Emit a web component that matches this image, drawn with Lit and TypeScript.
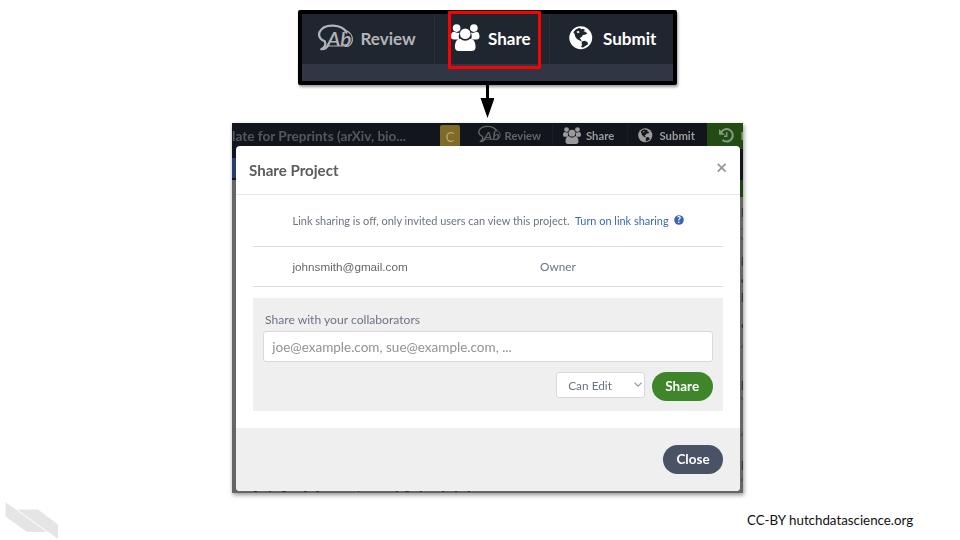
import { LitElement, html, svg, css } from "lit";
import { customElement, property } from "lit/decorators.js";

@customElement("tool-icon")
class ToolIcon extends LitElement {
  @property() name = "";
  static styles = css`
    :host { display: block; flex: none; }
    svg { display: block; width: 100%; height: 100%; overflow: visible; }
    .mark { font: italic 600 19px Lato, sans-serif; fill: currentColor; }
    .q { font: 900 8.500px Lato, sans-serif; fill: #fff; text-anchor: middle; }
  `;
  private body() {
    switch (this.name) {
      case "review":
        return svg`
          <path d="M28.500 7.600C24.500 -1 6 -2.300 1.600 7C-.3 11.500 3 15 6.800 16.300C8.200 19.500 6.600 22.800 3.300 24.200C7 24.300 9.400 22.200 10.300 19.800" fill="none" stroke="currentColor" stroke-width="2.200" stroke-linecap="round" stroke-linejoin="round"/>
          <path d="M27 5.200C32 7 35 11 34.300 15.500C33.700 19.500 31 21.700 26.800 21.400" fill="none" stroke="currentColor" stroke-width="1.300"/>
          <text class="mark" x="9" y="21.400" textLength="24.500" lengthAdjust="spacingAndGlyphs">Ab</text>
          <path d="M9.500 21H31" stroke="currentColor" stroke-width="1"/>`;
      case "share":
        return svg`<g fill="currentColor">
          <circle cx="5.700" cy="4.200" r="3.900"/><circle cx="23.300" cy="4.200" r="3.900"/>
          <path d="M3.200 8C1 8 0 10 0 12.800C0 15 1 15.900 3 15.900H8.600C7.600 13.500 7.700 11 8.800 9C7 9.300 5 9.200 3.200 8Z"/>
          <path d="M25.800 8C28 8 29 10 29 12.800C29 15 28 15.900 26 15.900H20.400C21.400 13.500 21.300 11 20.200 9C22 9.300 24 9.200 25.800 8Z"/>
          <circle cx="14.500" cy="10" r="5.400"/>
          <path d="M9.600 15C12 17.700 17 17.700 19.400 15C23.500 15 25 19 25 23.400C25 26 23.600 27.400 21 27.400H8C5.400 27.400 4 26 4 23.400C4 19 5.500 15 9.600 15Z"/></g>`;
      case "globe":
        return svg`<circle cx="12" cy="12" r="11.700" fill="currentColor"/>
          <path fill="var(--sea)" d="M5.200 5.300C7 3 9.400 2.200 11.400 2.100L12.200 3.400L14.300 2.700L16.400 4.100L14.700 5.300L16.800 5.900L18.600 7.600L16.400 9L14.200 9.300L12.900 11.200L10.900 12.300L12.300 14L13.100 16L10.900 14.800L8.100 13.200L6.200 10.500L5.800 8.100L4.500 6.600Z"/>
          <path fill="var(--sea)" d="M13.700 15.600L16 15L18.800 16.300L19.500 18.600L16.700 20.500L14.500 22L12.200 21.400L13.300 19.300L12.800 17.200Z"/>
          <path fill="currentColor" d="M7.800 5.700L10 5L10.800 6.600L8.700 7.500Z"/>`;
      case "history":
        return svg`<g fill="none" stroke="currentColor" stroke-width="2"><path d="M1.900 4.800A6.200 6.200 0 1 1 3.500 11.900"/><path d="M7.700 4.200V8.300H5" stroke-width="1.500"/></g><path fill="currentColor" d="M0 1V6.700H5.700Z"/>`;
      case "help":
        return svg`<circle cx="5" cy="5" r="4.800" fill="#3a66b5"/><text class="q" x="5" y="8">?</text>`;
      case "chevron":
        return svg`<path d="M.5 .7L4 4.100L7.500 .7" fill="none" stroke="#9a9ea6" stroke-width="1.200"/>`;
      default:
        return svg`<path d="M.8 .8L8.600 8.600M8.600 .8L.8 8.600" stroke="#999" stroke-width="1.900"/>`;
    }
  }
  render() {
    const boxes: Record<string, string> = {
      review: "0 0 34 25", share: "0 0 29 27.5", globe: "0 0 24 24",
      history: "0 0 15 15", help: "0 0 10 10", chevron: "0 0 8 5", close: "0 0 9.4 9.4",
    };
    return html`<svg viewBox=${boxes[this.name]}>${this.body()}</svg>`;
  }
}

@customElement("app-root")
class AppRoot extends LitElement {
  static styles = css`
    :host {
      display: flex; flex-direction: column; position: relative; width: 960px; height: 540px;
      overflow: hidden; background: #fff; font-family: Lato, sans-serif; box-sizing: border-box;
    }
    * { box-sizing: border-box; }
    span, button { white-space: nowrap; }
    .callout {
      position: relative; width: 379px; height: 75px; margin: 10px 0 0 298px; flex: none;
      border: 4px solid #000; border-radius: 2px; background: #303644;
      box-shadow: 1px 2px 3px rgba(0,0,0,.4);
    }
    .tools { display: flex; height: 50px; background: #1f262f; }
    .cell { display: flex; align-items: center; border-right: 1.500px solid #2a303b; color: #fff; font-weight: 700; font-size: 17px; }
    .cell.last { border: 0; }
    .c1 { width: 133px; padding-left: 16px; gap: 8.500px; color: #b3b4b7; }
    .c2 { width: 115px; padding-left: 16px; gap: 8.500px; }
    .c3 { width: 123px; padding-left: 19px; gap: 10.500px; }
    .callout .i-review { width: 34px; height: 25px; margin-top: -4px; }
    .callout .i-share { width: 28.500px; height: 27px; margin-top: -3px; }
    .callout .i-globe { width: 23.500px; height: 23.500px; margin-top: -3px; --sea: #1f262f; }
    .callout .cell span { margin-top: -2px; }
    .focus { position: absolute; left: 146px; top: -3px; width: 93px; height: 58px; border: 3px solid #f00; border-radius: 1px; }
    .arrow { position: relative; width: 14px; height: 37px; margin: -4px 0 0 480px; flex: none; display: block; }
    .shot {
      position: relative; width: 511px; height: 370px; margin: 5px 0 0 232px; flex: none;
      background: #666; overflow: hidden;
    }
    .shadow { flex: none; filter: drop-shadow(1px 2px 2px rgba(0,0,0,.42)); }
    .nav { display: flex; height: 57px; background: #12161c; color: #7b7c7e; font-weight: 700; font-size: 11.300px; }
    .nav > div { display: flex; align-items: center; height: 26px; flex: none; }
    .nav span { margin-top: -1px; }
    .title { width: 208px; color: #54575b; font-size: 13.600px; }
    .avatar { width: 20px; height: 24px; margin-top: 2px; padding-bottom: 3px; border-radius: 2px; justify-content: center; background: #806a27; color: #b5aa80; font-size: 13px; font-weight: 400; }
    .nav .n1 { width: 92px; padding-left: 17.500px; gap: 5px; color: #626365; }
    .nav .n2 { width: 75px; padding-left: 10px; gap: 5px; color: #9b9b9c; border-left: 1px solid #181c23; }
    .nav .n3 { width: 80px; padding-left: 10px; gap: 7px; color: #9b9b9c; border-left: 1px solid #181c23; }
    .nav .n4 { width: 36px; padding-left: 11.500px; gap: 7px; background: #224c13; color: #879981; }
    .nav .i-review { width: 22px; height: 16px; margin-top: -4px; }
    .nav .i-share { width: 18px; height: 17px; margin-top: -2px; }
    .nav .i-globe { width: 14.500px; height: 14.500px; margin-top: -1px; --sea: #12161c; }
    .i-history { width: 15px; height: 15px; margin-top: -1px; }
    .patch { position: absolute; }
    .p1 { left: 0; top: 35px; width: 5px; height: 20px; background: #263f6b; }
    .p2 { left: 507px; top: 57px; width: 4px; height: 17px; background: #1d4410; }
    .ticks { position: absolute; left: 508.500px; top: 80px; width: 3px; height: 285px; }
    .specks { position: absolute; left: 22px; top: 367px; width: 230px; height: 2px; }
    .modal {
      position: absolute; left: 4px; top: 22.500px; width: 504px; height: 345px;
      display: flex; flex-direction: column; background: #fff; border-radius: 4px; overflow: hidden;
      color: #6c7384; font-size: 10.970px;
    }
    .head { display: flex; justify-content: space-between; height: 49.500px; padding: 0 14px 0 13px; border-bottom: 1px solid #e8e8e8; flex: none; }
    .head span { color: #5c5c5e; font-size: 15.100px; font-weight: 700; line-height: 49px; }
    .head tool-icon { width: 9.400px; height: 9.400px; margin-top: 17.500px; }
    .body { height: 233px; padding: 0 17px; flex: none; }
    .row { display: flex; align-items: center; padding-left: 39.500px; border-bottom: 1px solid #dcdcdc; }
    .link { height: 52px; }
    .link a { color: #3b68b8; margin-left: 5.500px; font-size: 10.930px; }
    .link tool-icon { width: 10px; height: 10px; margin: -1px 0 0 5px; }
    .member { height: 40px; font-size: 11.750px; }
    .member span { flex: none; width: 247.500px; }
    .member .role { width: auto; }
    .member .mail { font-family: "Liberation Sans", sans-serif; color: #666; font-size: 11.700px; }
    .invite { margin-top: 11px; height: 113px; padding: 13.500px 10.300px 0 10.300px; background: #efefef; display: flex; flex-direction: column; }
    .invite label { height: 19px; line-height: 16px; padding-left: 1.700px; font-size: 12.130px; }
    .field { height: 31px; line-height: 30px; padding-left: 8px; background: #fff; border: 1px solid #d9d9d9; border-radius: 3px; color: #929292; font-size: 13.520px; }
    .actions { display: flex; justify-content: flex-end; gap: 7px; margin-top: 10.500px; }
    .select { display: flex; align-items: center; justify-content: space-between; width: 89px; height: 26px; padding: 0 2px 0 11.500px; background: #fff; border: 1px solid #d8d8d8; border-radius: 3px; font-size: 11.850px; }
    .select tool-icon { width: 8px; height: 5px; margin-top: -2px; }
    button { border: 0; padding: 0 0 2px; height: 29px; border-radius: 15px; color: #fff; font: 700 13.500px Lato, sans-serif; width: 61px; }
    .go { background: #3f8529; }
    .foot { flex: 1; display: flex; justify-content: flex-end; padding: 17px 17px 0; background: #efefef; }
    .close { background: #495365; width: 60px; }
    .credit { position: absolute; left: 747px; top: 512px; font-size: 13.320px; line-height: 16px; color: #111; }
    .logo { position: absolute; left: 5px; top: 501px; width: 54px; height: 39px; }
  `;

  render() {
    return html`
      <div class="callout">
        <div class="tools">
          <div class="cell c1"><tool-icon class="i-review" name="review"></tool-icon><span>Review</span></div>
          <div class="cell c2"><tool-icon class="i-share" name="share"></tool-icon><span>Share</span></div>
          <div class="cell c3 last"><tool-icon class="i-globe" name="globe"></tool-icon><span>Submit</span></div>
        </div>
        <div class="focus"></div>
      </div>
      <svg class="arrow" viewBox="0 0 14 37"><path d="M6 0H9V17H14.500L7.500 37L.5 17H6Z"/></svg>
      <div class="shadow">
        <div class="shot">
          <div class="nav">
            <div class="title"><span>late for Preprints (arXiv, bio...</span></div>
            <div class="avatar">C</div>
            <div class="n1"><tool-icon class="i-review" name="review"></tool-icon><span>Review</span></div>
            <div class="n2"><tool-icon class="i-share" name="share"></tool-icon><span>Share</span></div>
            <div class="n3"><tool-icon class="i-globe" name="globe"></tool-icon><span>Submit</span></div>
            <div class="n4"><tool-icon class="i-history" name="history"></tool-icon><span>H</span></div>
          </div>
          <div class="patch p1"></div>
          <div class="patch p2"></div>
          <svg class="ticks" viewBox="0 0 3 285">
            <path d="M1.500 5V14M1.500 54V63M1.500 90V99M1.500 178V187M1.500 258V267" stroke="#333944" stroke-width="1.500"/>
            <path d="M0 26H3M0 34L3 38M0 145L3 141M0 194L3 198M0 233L3 229M0 278L3 274" stroke="#40454e" stroke-width="1.200" fill="none"/>
            <circle cx="2.500" cy="78" r="2.200" fill="#303641"/><circle cx="2.500" cy="123" r="2.200" fill="#303641"/>
          </svg>
          <svg class="specks" viewBox="0 0 230 2"><path d="M0 1.500H3M15 1.500H17M28 1.500H32M50 1.500H53M62 1.500H65M104 1.500H105M142 1.500H144M151 1.500H155M166 1.500H168M188 1.500H190M201 1.500H203M214 1.500H216" stroke="#303030"/></svg>
          <div class="modal">
            <div class="head"><span>Share Project</span><tool-icon name="close"></tool-icon></div>
            <div class="body">
              <div class="row link"><span>Link sharing is off, only invited users can view this project.</span><a><span>Turn on link sharing</span></a><tool-icon name="help"></tool-icon></div>
              <div class="row member"><span class="mail">johnsmith@gmail.com</span><span class="role">Owner</span></div>
              <div class="invite">
                <label>Share with your collaborators</label>
                <div class="field"><span>joe@example.com, sue@example.com, ...</span></div>
                <div class="actions">
                  <div class="select"><span>Can Edit</span><tool-icon name="chevron"></tool-icon></div>
                  <button class="go">Share</button>
                </div>
              </div>
            </div>
            <div class="foot"><button class="close">Close</button></div>
          </div>
        </div>
      </div>
      <svg class="logo" viewBox="0 0 54 39"><path fill="#e5e5e5" d="M.5 1V15.500L22 31H42ZM12 8.500H33L53 23.500V38Z"/><path d="M.5 .8L53 38.300" stroke="#fff" stroke-width=".5"/></svg>
      <span class="credit">CC-BY hutchdatascience.org</span>
    `;
  }
}
